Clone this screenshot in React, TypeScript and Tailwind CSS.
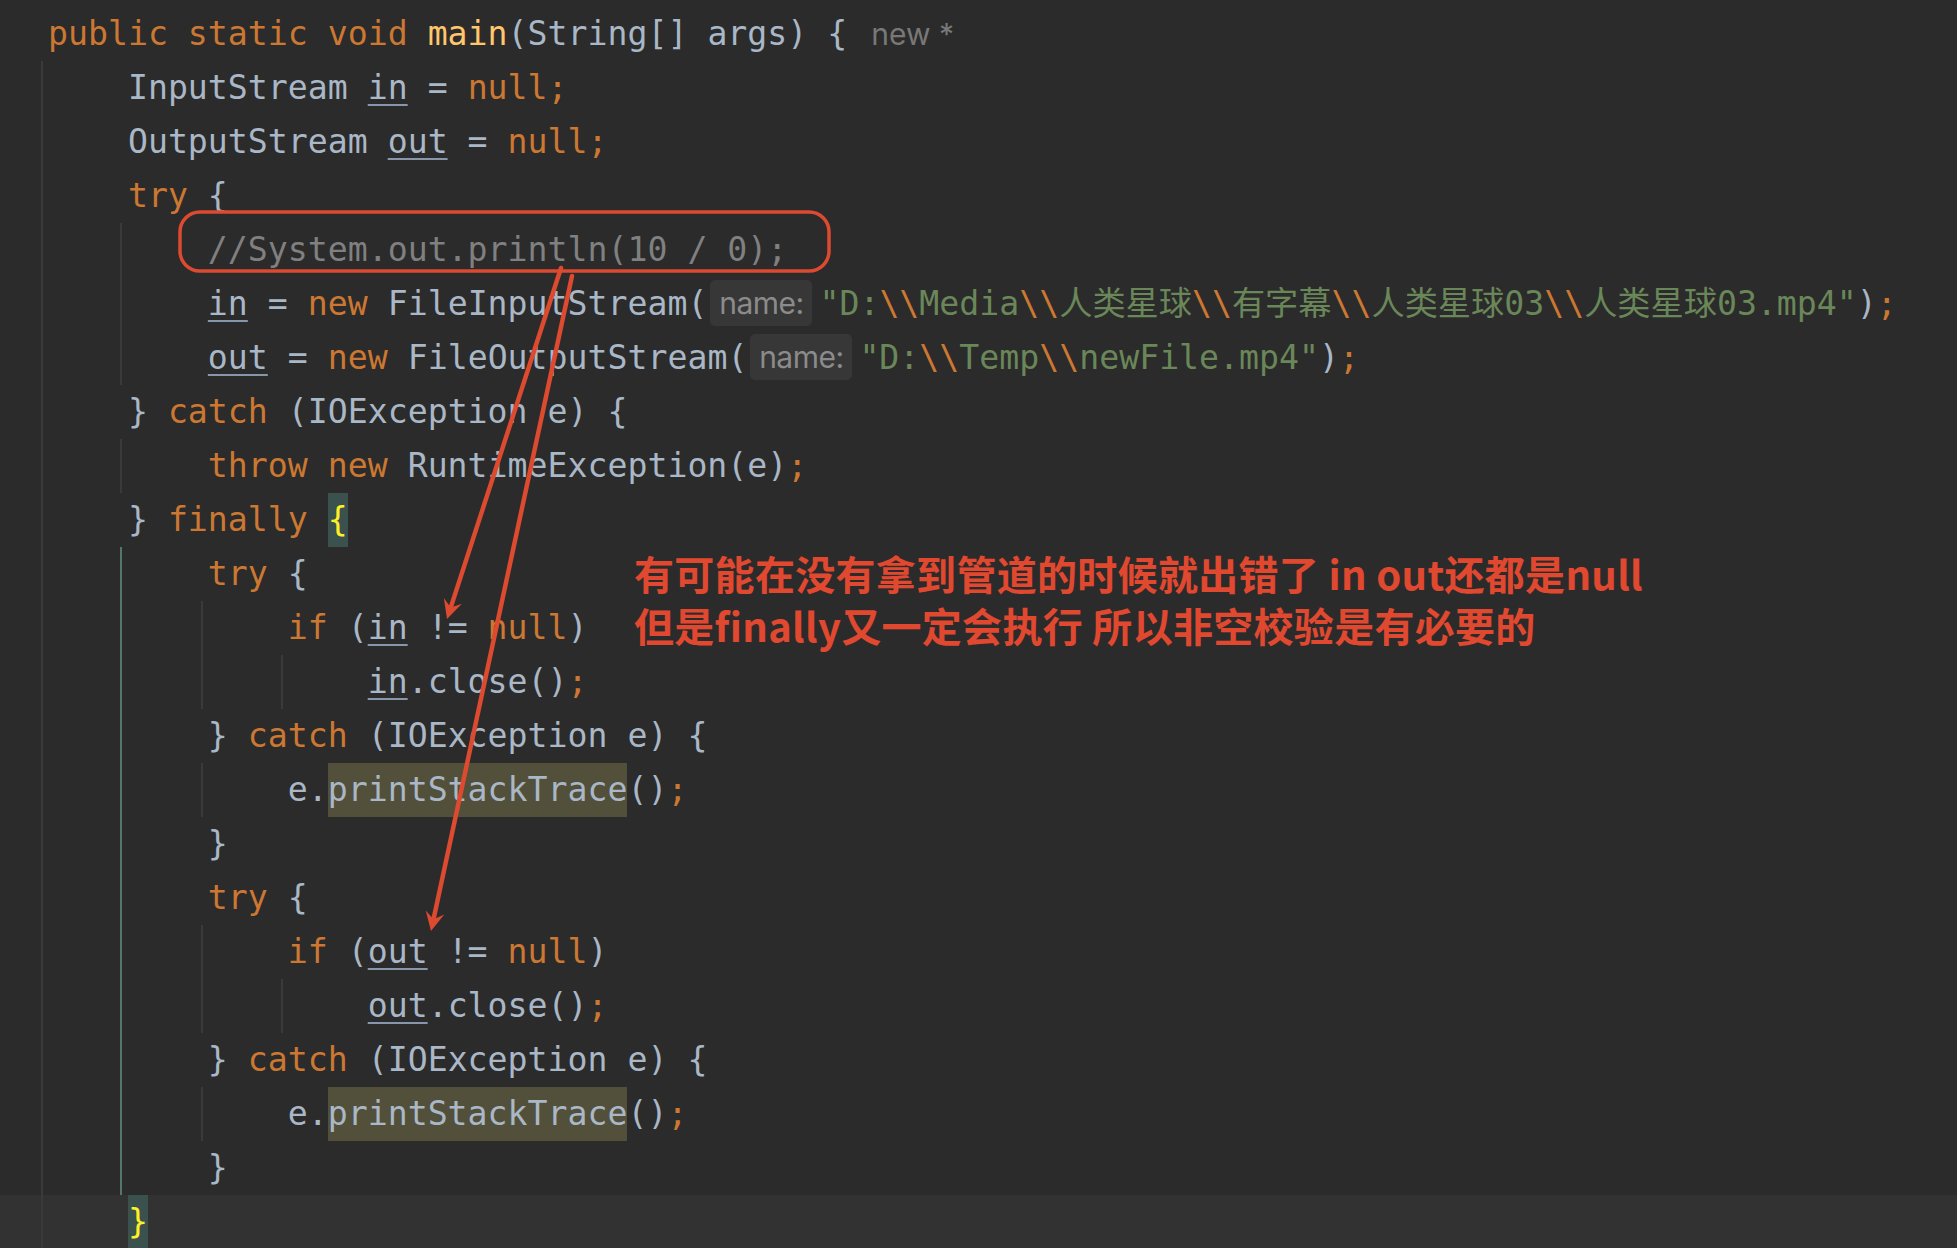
import { FC } from "react";

type Tok = { t: string; c: string; hint?: boolean };

const K = "text-[#cc7832]";
const D = "text-[#a9b7c6]";
const S = "text-[#6a8759]";
const C = "text-[#808080]";
const M = "text-[#ffc66d]";
const U = "text-[#a9b7c6] underline decoration-2 decoration-[#8796ab] underline-offset-[5px]";
const HL = "text-[#a9b7c6] bg-[#52503a] inline-block h-[54px] align-top";
const BR = "text-[#ffef28] bg-[#3b514d] inline-block h-[54px] align-top";

const tk = (t: string, c: string): Tok => ({ t, c });
const hint: Tok = { t: "name:", c: "", hint: true };

// indent guides: left offset class and colour class
const G0 = "left-[41px] bg-[#3a3a3a]";
const G1 = "left-[120px] bg-[#3a3a3a]";
const G1a = "left-[120px] bg-[#55766d]";
const G2 = "left-[201px] bg-[#3a3a3a]";
const G3 = "left-[281px] bg-[#3a3a3a]";

interface Line {
    toks: Tok[];
    guides: string[];
    current?: boolean;
    tail?: boolean;
}

const lines: Line[] = [
    { toks: [tk("public static void ", K), tk("main", M), tk("(String[] args) {", D)], guides: [], tail: true },
    { toks: [tk("    InputStream ", D), tk("in", U), tk(" = ", D), tk("null;", K)], guides: [G0] },
    { toks: [tk("    OutputStream ", D), tk("out", U), tk(" = ", D), tk("null;", K)], guides: [G0] },
    { toks: [tk("    try ", K), tk("{", D)], guides: [G0] },
    { toks: [tk("        //System.out.println(10 / 0);", C)], guides: [G0, G1] },
    {
        toks: [
            tk("        ", D), tk("in", U), tk(" = ", D), tk("new ", K), tk("FileInputStream(", D), hint,
            tk('"D:', S), tk("\\\\", K), tk("Media", S), tk("\\\\", K), tk("人类星球", S), tk("\\\\", K),
            tk("有字幕", S), tk("\\\\", K), tk("人类星球03", S), tk("\\\\", K), tk('人类星球03.mp4"', S),
            tk(")", D), tk(";", K),
        ],
        guides: [G0, G1],
    },
    {
        toks: [
            tk("        ", D), tk("out", U), tk(" = ", D), tk("new ", K), tk("FileOutputStream(", D), hint,
            tk('"D:', S), tk("\\\\", K), tk("Temp", S), tk("\\\\", K), tk('newFile.mp4"', S),
            tk(")", D), tk(";", K),
        ],
        guides: [G0, G1],
    },
    { toks: [tk("    } ", D), tk("catch ", K), tk("(IOException e) {", D)], guides: [G0] },
    { toks: [tk("        throw new ", K), tk("RuntimeException(e)", D), tk(";", K)], guides: [G0, G1] },
    { toks: [tk("    } ", D), tk("finally ", K), tk("{", BR)], guides: [G0] },
    { toks: [tk("        try ", K), tk("{", D)], guides: [G0, G1a] },
    { toks: [tk("            if ", K), tk("(", D), tk("in", U), tk(" != ", D), tk("null", K), tk(")", D)], guides: [G0, G1a, G2] },
    { toks: [tk("                ", D), tk("in", U), tk(".close()", D), tk(";", K)], guides: [G0, G1a, G2, G3] },
    { toks: [tk("        } ", D), tk("catch ", K), tk("(IOException e) {", D)], guides: [G0, G1a] },
    { toks: [tk("            e.", D), tk("printStackTrace", HL), tk("()", D), tk(";", K)], guides: [G0, G1a, G2] },
    { toks: [tk("        }", D)], guides: [G0, G1a] },
    { toks: [tk("        try ", K), tk("{", D)], guides: [G0, G1a] },
    { toks: [tk("            if ", K), tk("(", D), tk("out", U), tk(" != ", D), tk("null", K), tk(")", D)], guides: [G0, G1a, G2] },
    { toks: [tk("                ", D), tk("out", U), tk(".close()", D), tk(";", K)], guides: [G0, G1a, G2, G3] },
    { toks: [tk("        } ", D), tk("catch ", K), tk("(IOException e) {", D)], guides: [G0, G1a] },
    { toks: [tk("            e.", D), tk("printStackTrace", HL), tk("()", D), tk(";", K)], guides: [G0, G1a, G2] },
    { toks: [tk("        }", D)], guides: [G0, G1a] },
    { toks: [tk("    ", D), tk("}", BR)], guides: [G0], current: true },
];

const CodeLine: FC<{ line: Line }> = ({ line }) => (
    <div className={`relative h-[54px] pl-[48px] whitespace-pre leading-[54px] ${line.current ? "bg-[#323232]" : ""}`}>
        {line.guides.map((g) => (
            <span key={g} className={`absolute top-0 h-[54px] w-[2px] ${g}`} />
        ))}
        {line.toks.map((tok, i) =>
            tok.hint ? (
                <span
                    key={i}
                    className="inline-block align-top mt-[3px] ml-[3px] mr-[7px] h-[46px] w-[102px] rounded-[5px] bg-[#373737] text-center font-['Inter',sans-serif] text-[30px] leading-[46px] tracking-[-0.5px] text-[#8b8b8b]"
                >
                    {tok.t}
                </span>
            ) : (
                <span key={i} className={tok.c}>
                    {tok.t}
                </span>
            )
        )}
        {line.tail && (
            <span className="ml-[24px] font-['Inter',sans-serif] text-[30px] text-[#787878]">new *</span>
        )}
    </div>
);

const arrowParts = (x1: number, y1: number, x2: number, y2: number) => {
    const dx = x2 - x1;
    const dy = y2 - y1;
    const l = Math.hypot(dx, dy);
    const ux = dx / l;
    const uy = dy / l;
    const nx = -uy;
    const ny = ux;
    const bx = x2 - ux * 19;
    const by = y2 - uy * 19;
    const mx = x2 - ux * 12;
    const my = y2 - uy * 12;
    return {
        shaft: { x1, y1, x2: mx, y2: my },
        head: `${x2},${y2} ${bx + nx * 9.5},${by + ny * 9.5} ${mx},${my} ${bx - nx * 9.5},${by - ny * 9.5}`,
    };
};

const Annotations: FC = () => {
    const a1 = arrowParts(561, 268, 447, 619);
    const a2 = arrowParts(572, 276, 431, 931);
    return (
        <>
            <svg className="pointer-events-none absolute left-0 top-0" width={1957} height={1248}>
                <rect x={180} y={212} width={649} height={59} rx={20} fill="none" stroke="#dc4a30" strokeWidth={3.5} />
                {[a1, a2].map((a, i) => (
                    <g key={i}>
                        <line {...a.shaft} stroke="#dc4a30" strokeWidth={4.5} strokeLinecap="round" />
                        <polygon points={a.head} fill="#dc4a30" />
                    </g>
                ))}
            </svg>
            <div className="absolute left-[634px] top-[547px] whitespace-pre font-['Noto_Sans_CJK_SC',sans-serif] text-[40px] font-bold leading-[52px] tracking-[0.3px] text-[#e0482f]">
                <div>有可能在没有拿到管道的时候就出错了 in out还都是null</div>
                <div>但是finally又一定会执行 所以非空校验是有必要的</div>
            </div>
        </>
    );
};

const App: FC = () => (
    <div className="relative h-[1248px] w-[1957px] overflow-hidden bg-[#2b2b2b] pt-[7px] font-['DejaVu_Sans_Mono','Noto_Sans_CJK_SC',monospace] text-[33.2px]">
        {lines.map((line, i) => (
            <CodeLine key={i} line={line} />
        ))}
        <Annotations />
    </div>
);

export default App;
